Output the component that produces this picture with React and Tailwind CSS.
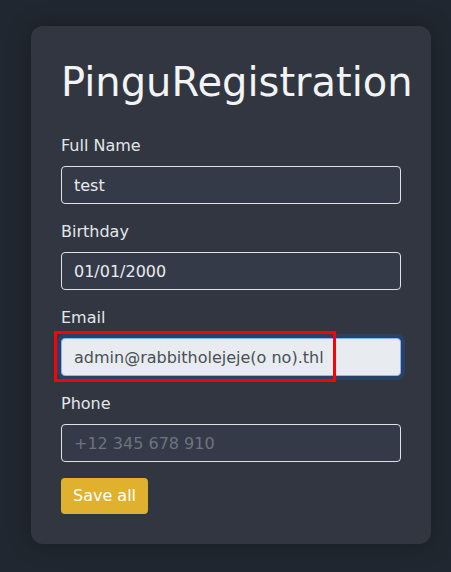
import React from 'react'

const fields = [
  { label: 'Full Name', value: 'test' },
  { label: 'Birthday', value: '01/01/2000' },
  { label: 'Email', value: 'admin@rabbitholejeje(o no).thl', focused: true },
  { label: 'Phone', placeholder: '+12 345 678 910' },
]

export default function App() {
  return (
    <div className="min-h-[572px] w-full bg-[#212730] pt-[26px] pl-[31px] font-['DejaVu_Sans',sans-serif]">
      <div className="w-[400px] rounded-xl bg-[#313641] px-[30px] pt-[32px] pb-[30px] shadow-[0_0_24px_rgba(0,0,0,0.25)]">
        <h1 className="mb-[28px] text-[40px] leading-[48px] text-[#f1f3f5] whitespace-nowrap">PinguRegistration</h1>

        {fields.map((f) => (
          <div key={f.label} className="mb-4">
            <label className="mb-2 block text-base leading-6 text-[#e3e6ea]">{f.label}</label>
            {f.focused ? (
              <div className="relative">
                <input
                  readOnly
                  value={f.value}
                  className="block h-[38px] w-[340px] rounded border border-[#86b7fe] bg-[#e8ebef] px-3 text-base text-[#495057] shadow-[0_0_0_4px_rgba(30,80,150,0.45)] outline-none"
                />
                {/* annotation box */}
                <div className="pointer-events-none absolute -top-[7px] -left-[7px] h-[51px] w-[282px] border-[3px] border-[#ff0000]" />
              </div>
            ) : (
              <input
                readOnly
                value={f.value || ''}
                placeholder={f.placeholder}
                className="block h-[38px] w-[340px] rounded border border-[#dee2e6] bg-[#353a48] px-3 text-base text-[#e9ecef] placeholder:text-[#6c757d] outline-none"
              />
            )}
          </div>
        ))}

        <button className="h-9 rounded bg-[#e0b12e] px-3 text-base leading-6 text-white">Save all</button>
      </div>
    </div>
  )
}
